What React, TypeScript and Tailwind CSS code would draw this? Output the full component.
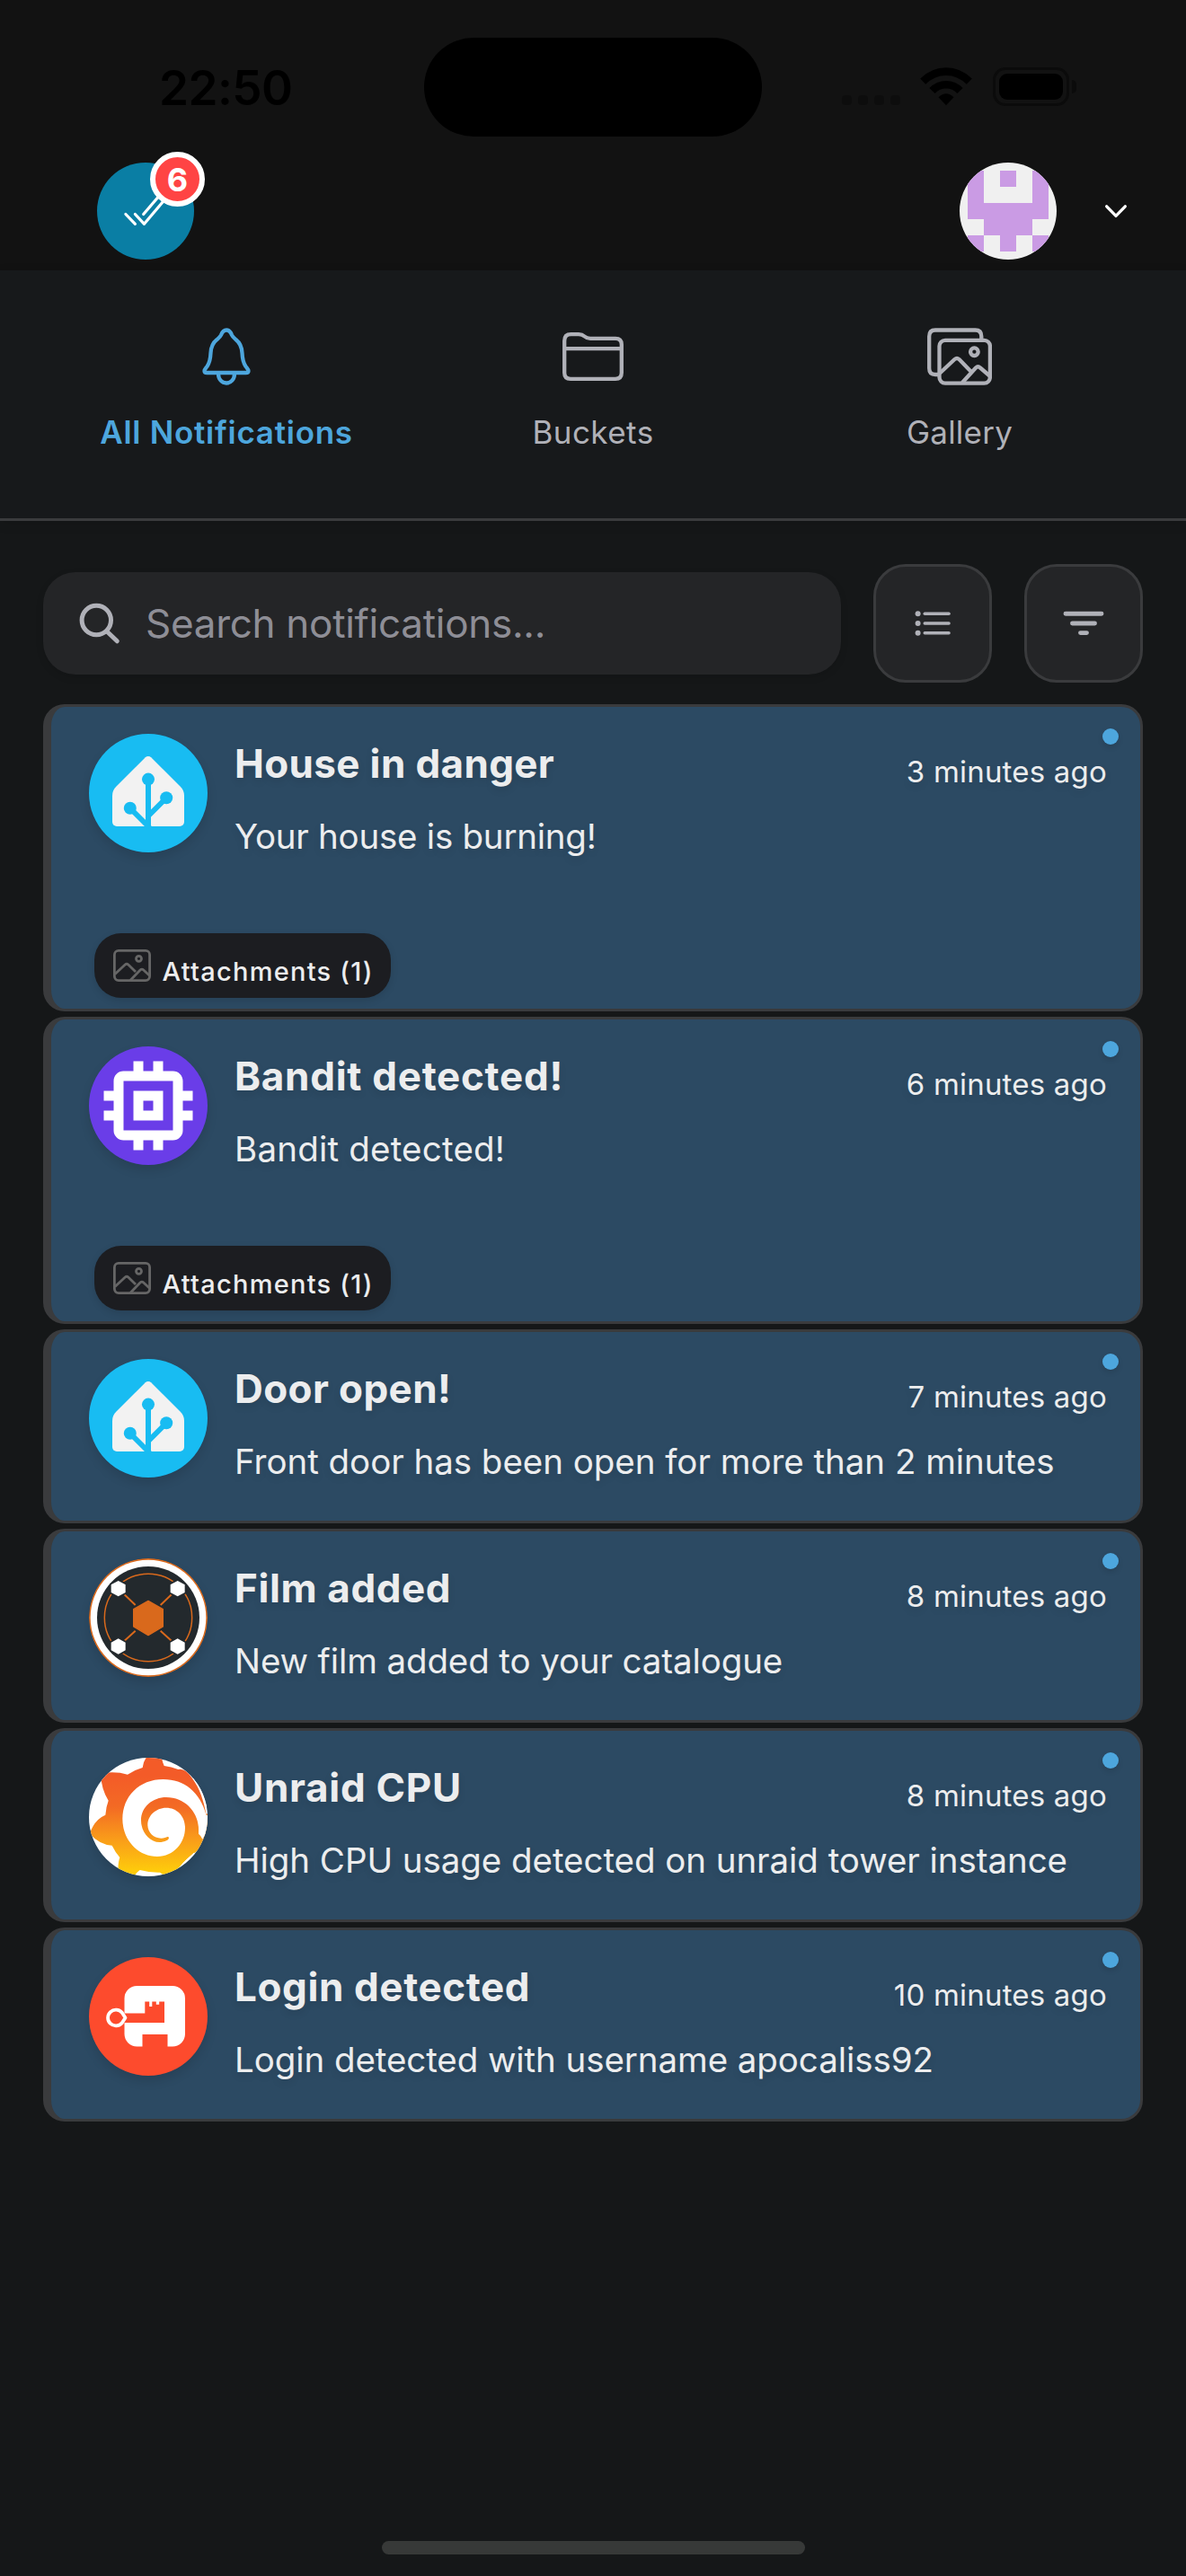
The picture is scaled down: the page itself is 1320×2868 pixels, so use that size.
import type { ReactNode } from "react";

function HomeAssistantLogo() {
  return (
    <svg viewBox="0 0 132 132" className="size-full">
      <rect width="132" height="132" fill="#18bcf2" />
      <path
        d="M62.8 26.2a4.6 4.6 0 0 1 6.4 0L101.5 58.5c3 3 4.5 6.4 4.5 10.6V98a5 5 0 0 1-5 5H31a5 5 0 0 1-5-5V69.1c0-4.200 1.500-7.600 4.500-10.600Z"
        fill="#f2f2f2"
      />
      <path d="M66 50V104M46 83l21.500 21.500M86 71.500L66 91.500" fill="none" stroke="#18bcf2" strokeWidth="6" />
      <g fill="#18bcf2">
        <circle cx="66" cy="50.6" r="7" />
        <circle cx="45.8" cy="82.7" r="7" />
        <circle cx="86.2" cy="71.3" r="7" />
      </g>
    </svg>
  );
}

function ChipLogo() {
  return (
    <svg viewBox="0 0 24 24" className="size-full">
      <rect width="24" height="24" fill="#6a3de8" />
      <path
        fill="#fff"
        d="M17 17H7V7H17M21 11V9H19V7C19 5.890 18.100 5 17 5H15V3H13V5H11V3H9V5H7C5.890 5 5 5.890 5 7V9H3V11H5V13H3V15H5V17A2 2 0 0 0 7 19H9V21H11V19H13V21H15V19H17A2 2 0 0 0 19 17V15H21V13H19V11M13 13H11V11H13M15 9H9V15H15V9Z"
      />
    </svg>
  );
}

function FilmLogo() {
  const nodes = [
    [125, 146],
    [323, 146],
    [125, 339],
    [323, 339],
  ];
  return (
    <svg viewBox="27 45 396 396" className="size-full">
      <circle cx="225" cy="243" r="198" fill="#d9691c" />
      <circle cx="225" cy="243" r="193" fill="#fff" />
      <circle cx="225" cy="243" r="171" fill="#23292d" />
      <circle cx="225" cy="243" r="146" fill="none" stroke="#d9691c" strokeWidth="4.500" />
      <path d="M125 146L182 201M323 146L266 201M125 339L182 287M323 339L266 287" stroke="#d9691c" strokeWidth="6" />
      {nodes.map(([x, y]) => (
        <g key={`${x}-${y}`} transform={`translate(${x} ${y})`}>
          <path d="M0-33L29-16V16L0 33L-29 16V-16Z" fill="#23292d" />
          <path d="M0-26L24-13V13L0 26L-24 13V-13Z" fill="#fff" />
        </g>
      ))}
      <path d="M225 187L274 215V273L225 302L176 273V215Z" fill="#d9691c" stroke="#d9691c" strokeWidth="4" strokeLinejoin="round" />
    </svg>
  );
}

function GrafanaLogo() {
  return (
    <svg viewBox="27 36 396 396" className="size-full">
      <defs>
        <linearGradient id="flame" x1="0" y1="60" x2="0" y2="410" gradientUnits="userSpaceOnUse">
          <stop offset="0.100" stopColor="#f35b28" />
          <stop offset="0.400" stopColor="#f36a24" />
          <stop offset="0.700" stopColor="#f99b1a" />
          <stop offset="1" stopColor="#fec90c" />
        </linearGradient>
      </defs>
      <rect x="27" y="36" width="396" height="396" fill="#fff" />
      <path
        fill="url(#flame)"
        d="M224 28Q208 46 206 69Q178 77 156 92Q116 80 66 88Q68 142 92 179Q84 200 82 227Q44 243 30 290Q62 326 104 329Q114 350 130 369Q121 392 127 440H172Q182 422 197 411Q230 420 264 419Q280 428 288 440L330 400Q345 380 376 356L440 310V200L419 226C410 180 398 140 372 105Q350 70 325 75Q302 66 278 63Q272 50 268 28Z"
      />
      <path
        fill="#fff"
        d="M419 228C398 150 345 108 275 108C195 108 139 165 139 240C139 310 190 366 255 366C310 366 348 320 348 270C348 230 320 203 285 203C250 203 223 230 223 260C223 285 243 305 268 305C278 305 285 301 289 300C296 300 295 308 287 312C278 317 270 318 262 318C230 318 201 285 201 245C201 200 240 168 285 168C350 168 393 220 393 275V290Q402 297 406 308L430 270V228Z"
      />
      <path d="M375 105Q408 145 419 200M340 390Q358 372 378 354" fill="none" stroke="#fff" strokeWidth="3" />
    </svg>
  );
}

function LoginLogo() {
  return (
    <svg viewBox="0 0 132 132" className="size-full">
      <rect width="132" height="132" fill="#fd4b2d" />
      <path
        fill="#fff"
        d="M53.500 32H93a14 14 0 0 1 14 14V85.500a14 14 0 0 1-14 14H87.500V86H59.500V99.500H53.500a14 14 0 0 1-14-14V73H84V49.500H78.200V52.700H74.800V49.500H70.300V55H67.200V49.500H62.300V62.500H39.500V46a14 14 0 0 1 14-14Z"
      />
      <path
        d="M40.500 67.500L36.800 61.800A8.900 8.900 0 1 0 36.800 73.200Z"
        fill="#fd4b2d"
        stroke="#fff"
        strokeWidth="3.800"
        strokeLinejoin="round"
      />
    </svg>
  );
}

function BellIcon() {
  return (
    <svg viewBox="216 361 72 72" className="size-[72px]" fill="none" stroke="currentColor" strokeWidth="4.300" strokeLinejoin="round">
      <path d="M252 367.500C248.500 367.500 247.200 370 246 373C245 375.300 243.500 376.400 241.300 378.200C236.500 382 234.800 387 234.500 393C234.200 400 233.600 403.500 230.500 408C228.800 410.200 227.500 411.300 227.500 412.900C227.500 414.300 228.500 415 230.300 415H273.700C275.500 415 276.500 414.300 276.500 412.900C276.500 411.300 275.200 410.200 273.500 408C270.400 403.500 269.800 400 269.500 393C269.200 387 267.500 382 262.700 378.200C260.500 376.400 259 375.300 258 373C256.800 370 255.500 367.500 252 367.500Z" />
      <path d="M243 416C243 422.500 247 426.500 252 426.500S261 422.500 261 416" />
    </svg>
  );
}

function FolderIcon() {
  return (
    <svg viewBox="624 361 72 72" className="size-[72px]" fill="none" stroke="currentColor" strokeWidth="4.300">
      <path d="M628.200 379.500Q628.200 372.200 635.500 372.200H644Q648 372.200 650.500 374.500Q653 376.800 657 376.800H685Q691.800 376.800 691.800 383.500V415Q691.800 421.800 685 421.800H635Q628.200 421.800 628.200 415ZM628.200 388.200H691.800" />
    </svg>
  );
}

function GalleryIcon() {
  return (
    <svg viewBox="1032 361 72 72" className="size-[72px]" fill="none" stroke="currentColor" strokeWidth="4.300" strokeLinejoin="round">
      <path d="M1045 417H1041Q1034.200 417 1034.200 410V374.500Q1034.200 367.500 1041 367.500H1085.500Q1092.300 367.500 1092.300 374.500V378" />
      <rect x="1045.500" y="378.800" width="56.400" height="47.800" rx="6.500" />
      <circle cx="1084.400" cy="391.700" r="4.300" />
      <path d="M1046 415.500L1062.500 400Q1065 397.800 1067.500 400L1081 414M1071 426L1086 409.500Q1088.500 407 1091 409.500L1101.500 418.500" />
    </svg>
  );
}

function ImageIcon() {
  return (
    <svg viewBox="126 1057 42 36" className="h-9 w-[42px]" fill="none" stroke="#666" strokeWidth="2.800">
      <rect x="127.400" y="1058.400" width="39.200" height="33.200" rx="4.500" />
      <circle cx="154.500" cy="1067.300" r="3" />
      <path d="M128 1084.500L139.200 1074Q141 1072.400 142.800 1074L151 1082M145 1091.500L156 1080Q157.900 1078.200 159.800 1080L166.500 1086.300" />
    </svg>
  );
}

type Item = {
  title: string;
  titleClass: string;
  body: string;
  bodyClass: string;
  time: string;
  logo: ReactNode;
  attachment?: boolean;
};

const items: Item[] = [
  { title: "House in danger", titleClass: "tracking-[0.35px]", body: "Your house is burning!", bodyClass: "tracking-[-0.25px]", time: "3 minutes ago", logo: <HomeAssistantLogo />, attachment: true },
  { title: "Bandit detected!", titleClass: "tracking-[0.72px]", body: "Bandit detected!", bodyClass: "tracking-[0.2px]", time: "6 minutes ago", logo: <ChipLogo />, attachment: true },
  { title: "Door open!", titleClass: "tracking-[0.4px]", body: "Front door has been open for more than 2 minutes", bodyClass: "tracking-[-0.03px]", time: "7 minutes ago", logo: <HomeAssistantLogo /> },
  { title: "Film added", titleClass: "tracking-[0.6px]", body: "New film added to your catalogue", bodyClass: "tracking-[-0.12px]", time: "8 minutes ago", logo: <FilmLogo /> },
  { title: "Unraid CPU", titleClass: "tracking-[0.7px]", body: "High CPU usage detected on unraid tower instance", bodyClass: "tracking-[-0.06px]", time: "8 minutes ago", logo: <GrafanaLogo /> },
  { title: "Login detected", titleClass: "tracking-[0.6px]", body: "Login detected with username apocaliss92", bodyClass: "tracking-[-0.08px]", time: "10 minutes ago", logo: <LoginLogo /> },
];

function NotificationCard({ item }: { item: Item }) {
  return (
    <article
      className={`relative flex flex-col rounded-3xl border-3 border-l-9 border-[#3a3b3d] bg-[#2c4a63] ${item.attachment ? "h-[342px]" : "h-[216px]"}`}
    >
      <span className="absolute top-6 right-6 size-[18px] rounded-full bg-[#4da6dd] shadow-[0_3px_6px_rgba(0,0,0,0.12)]" />
      <div className="flex pt-[30px] pr-[37px] pl-[42px]">
        <div className="size-[132px] shrink-0 overflow-hidden rounded-full shadow-[0_6px_12px_rgba(0,0,0,0.12)]">{item.logo}</div>
        <div className="-mt-[30px] ml-[30px] flex-1 text-[#ecedee] [text-shadow:0_4px_8px_rgba(0,0,0,0.1)]">
          <div className="flex justify-between">
            <h2 className={`mt-[33px] text-[44px] leading-[60px] font-bold ${item.titleClass}`}>{item.title}</h2>
            <time className="mt-[51px] text-[33px] leading-[42px] tracking-[0.2px]">{item.time}</time>
          </div>
          <p className={`mt-[24px] text-[38.5px] leading-[54px] whitespace-nowrap ${item.bodyClass}`}>{item.body}</p>
        </div>
      </div>
      {item.attachment && (
        <div className="mt-auto mb-3 ml-12 flex h-[72px] w-[330px] items-center rounded-[30px] bg-[#1c1d21] pl-[21px] shadow-[0_3px_9px_rgba(0,0,0,0.12)]">
          <ImageIcon />
          <span className="mt-[13px] ml-[12.5px] text-[29px] leading-[36px] font-medium tracking-[1.25px] whitespace-nowrap text-[#ecedee]">
            Attachments (1)
          </span>
        </div>
      )}
    </article>
  );
}

function StatusBar() {
  return (
    <div className="flex h-[181px] items-start">
      <div className="mt-[67px] w-[472px] pl-[177px] text-[53px] leading-[62px] font-semibold tracking-[-0.57px] text-black">22:50</div>
      <div className="mt-[42px] h-[110px] w-[376px] rounded-[55px] bg-black" />
      <div className="mt-[106px] ml-[89px] flex gap-[7px]">
        {[0, 1, 2, 3].map((i) => (
          <span key={i} className="h-[11px] w-[11px] rounded-[4px] bg-[#0d0d0d]" />
        ))}
      </div>
      <svg viewBox="0 0 58 43" className="mt-[75px] ml-[22px] h-[43px] w-[58px]">
        <g fill="none" stroke="#000" strokeWidth="8.600">
          <path d="M3.200 15.600Q14.500 4.600 29 4.600T54.800 15.600" />
          <path d="M13.500 26Q20 19.200 29 19.200T44.500 26" />
        </g>
        <path d="M20.500 33.200Q29 25.500 37.500 33.200L29 42.200Z" fill="#000" />
      </svg>
      <div className="mt-[75px] ml-[23px] h-[43px] w-[85px] rounded-[14px] border-[3px] border-[#0b0b0b] p-[4px]">
        <div className="h-full w-full rounded-[9px] bg-black" />
      </div>
      <div className="mt-[89px] ml-[3px] h-[15px] w-[5px] rounded-r-full bg-[#0b0b0b]" />
    </div>
  );
}

function Identicon() {
  const rows = ["10101", "10001", "11111", "01110", "10101"];
  return (
    <svg viewBox="-0.500 -0.500 6 6" className="size-[108px] rounded-full bg-[#f0f0f0]" shapeRendering="crispEdges">
      {rows.flatMap((row, y) =>
        [...row].map((cell, x) => (cell === "1" ? <rect key={`${x}-${y}`} x={x} y={y} width="1" height="1" fill="#ca9be4" /> : null)),
      )}
    </svg>
  );
}

export default function App() {
  return (
    <div className="flex h-[2868px] w-[1320px] flex-col overflow-hidden bg-[#151718] font-[Inter,sans-serif]">
      <header className="h-[301px] shrink-0 bg-[#121212]">
        <StatusBar />
        <div className="flex items-center pl-[108px]">
          <div className="relative flex size-[108px] items-center justify-center rounded-full bg-[#0a7ea4]">
            <svg viewBox="0 0 54 36" className="h-9 w-[54px]" fill="none" stroke="#fff" strokeWidth="3.200" strokeLinecap="round" strokeLinejoin="round">
              <path d="M4.900 21.500L15.400 32.300M15.400 21.500L25.500 32.300L49 4.500M24.700 21.500L40.500 3" />
            </svg>
            <div className="absolute -top-3 -right-3 flex size-[61px] items-center justify-center rounded-full border-[6px] border-white bg-[#ff4444] text-[36px] leading-none font-bold text-white">
              6
            </div>
          </div>
          <div className="mr-[51px] ml-[852px]">
            <Identicon />
          </div>
          <svg viewBox="0 0 30 30" className="size-[30px]" fill="none" stroke="#fff" strokeWidth="3.300" strokeLinecap="round" strokeLinejoin="round">
            <path d="M4.700 9.800L15 20.400L25.300 9.800" />
          </svg>
        </div>
      </header>

      <nav className="grid h-[279px] shrink-0 grid-cols-3 border-b-3 border-[#3a3b3d] bg-[#17191b] px-12 pt-[60px] text-[35px] leading-[48px] text-[#b0b1b8] shadow-[0_3px_12px_rgba(0,0,0,0.1)]">
        <div className="flex flex-col items-center gap-[24px] font-semibold tracking-[0.72px] text-[#4da6dd]">
          <BellIcon />
          All Notifications
        </div>
        <div className="flex flex-col items-center gap-[24px] tracking-[0.46px]">
          <FolderIcon />
          Buckets
        </div>
        <div className="flex flex-col items-center gap-[24px] tracking-[0.23px]">
          <GalleryIcon />
          Gallery
        </div>
      </nav>

      <div className="mt-12 flex shrink-0 items-center gap-9 px-12">
        <label className="flex h-[114px] flex-1 items-center rounded-[36px] bg-[#242527] pl-[39px] shadow-[0_3px_9px_rgba(0,0,0,0.12)]">
          <svg viewBox="87 670 48 48" className="size-12" fill="none" stroke="#b0b1b8" strokeWidth="5" strokeLinecap="round">
            <circle cx="107.300" cy="690.500" r="16.200" />
            <path d="M119 703L130.300 713.800" />
          </svg>
          <input
            placeholder="Search notifications..."
            className="ml-[27px] w-[600px] bg-transparent text-[44px] leading-[60px] tracking-[-0.29px] text-white outline-none placeholder:text-[#8e8e96]"
          />
        </label>
        <button className="flex size-[132px] items-center justify-center rounded-[36px] border-3 border-[#3a3b3d] bg-[#242527]">
          <svg viewBox="0 0 48 48" className="size-12 text-[#b0b1b8]" fill="currentColor">
            {[13.3, 24, 34.7].map((y) => (
              <g key={y}>
                <circle cx="7.600" cy={y} r="3" />
                <rect x="13.500" y={y - 1.7} width="30.300" height="3.400" rx="1.700" />
              </g>
            ))}
          </svg>
        </button>
        <button className="flex size-[132px] items-center justify-center rounded-[36px] border-3 border-[#3a3b3d] bg-[#242527]">
          <svg viewBox="0 0 48 48" className="size-12" fill="none" stroke="#b0b1b8" strokeWidth="4.900" strokeLinecap="round">
            <path d="M4 13.300H44M11.500 24H36.500M20.500 34.600H27.500" />
          </svg>
        </button>
      </div>

      <main className="mt-6 flex flex-col gap-1.5 px-12">
        {items.map((item) => (
          <NotificationCard key={item.title} item={item} />
        ))}
      </main>

      <div className="mx-auto mt-auto mb-6 h-[15px] w-[471px] shrink-0 rounded-full bg-[#373938]" />
    </div>
  );
}
